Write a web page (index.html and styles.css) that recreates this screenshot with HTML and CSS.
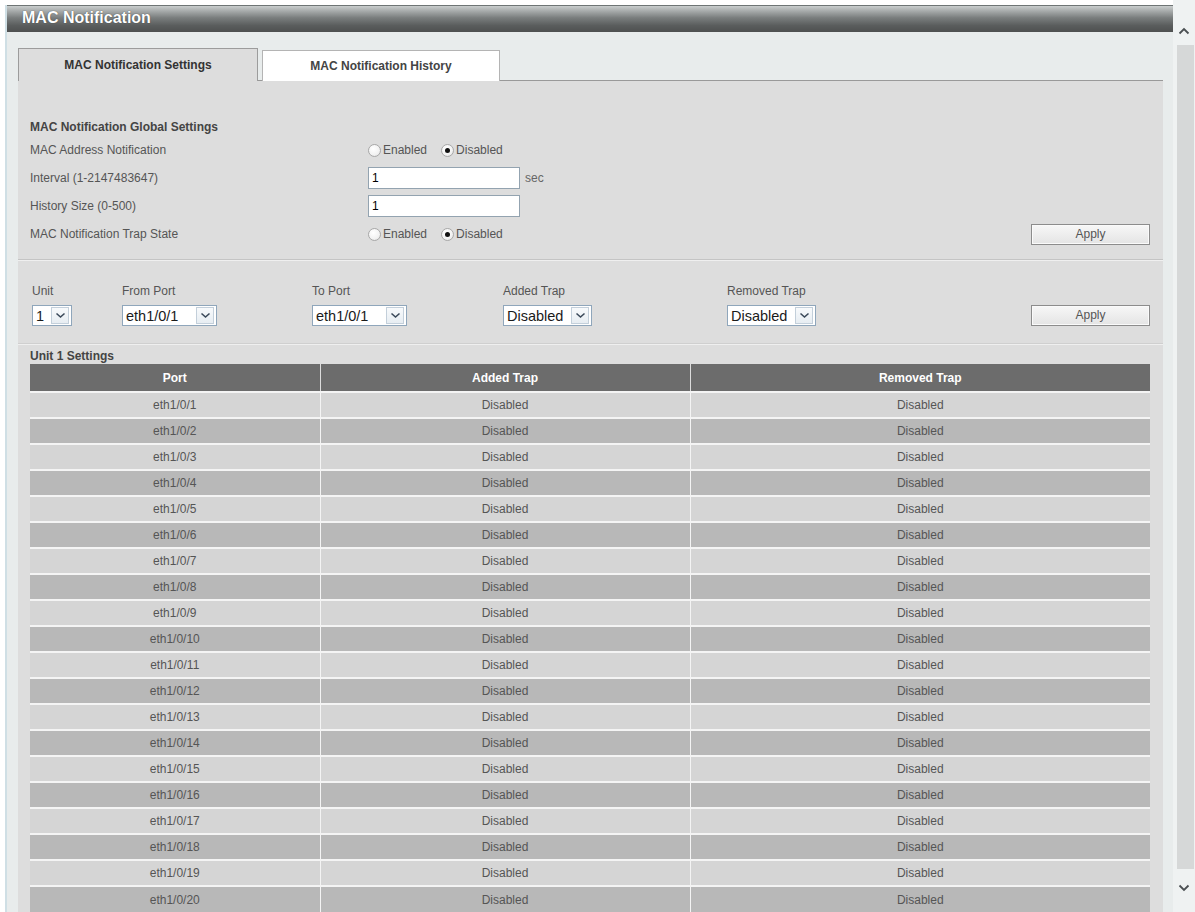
FILE: index.html
```html
<!DOCTYPE html>
<html>
<head>
<meta charset="utf-8">
<title>MAC Notification</title>
<link rel="stylesheet" href="styles.css">
</head>
<body>
<div class="screen">
  <div class="main">
    <div class="titlebar">MAC Notification</div>
    <div class="content">
      <div class="tabs">
        <div class="tab active">MAC Notification Settings</div>
        <div class="tab">MAC Notification History</div>
      </div>
      <div class="panel">
        <div class="section global">
          <div class="sec-title">MAC Notification Global Settings</div>
          <div class="grid">
            <div class="lbl">MAC Address Notification</div>
            <div class="ctl"><span class="radio"></span><span class="rtext">Enabled</span><span class="radio on"></span><span class="rtext">Disabled</span></div>
            <div></div>
            <div class="lbl">Interval (1-2147483647)</div>
            <div class="ctl"><span class="input">1</span><span class="unit">sec</span></div>
            <div></div>
            <div class="lbl">History Size (0-500)</div>
            <div class="ctl"><span class="input">1</span></div>
            <div></div>
            <div class="lbl">MAC Notification Trap State</div>
            <div class="ctl"><span class="radio"></span><span class="rtext">Enabled</span><span class="radio on"></span><span class="rtext">Disabled</span></div>
            <div class="btn-cell"><span class="btn">Apply</span></div>
          </div>
        </div>
        <div class="section ports">
          <div class="pgrid">
            <div class="field"><div class="flabel">Unit</div><div class="sel w-unit"><span>1</span><span class="arrow"><svg width="11" height="7" viewBox="0 0 11 7"><path d="M1.5 1.5 L5.5 5 L9.5 1.5" fill="none" stroke="#3c4a5a" stroke-width="1.6"/></svg></span></div></div>
            <div class="field"><div class="flabel">From Port</div><div class="sel w-port"><span>eth1/0/1</span><span class="arrow"><svg width="11" height="7" viewBox="0 0 11 7"><path d="M1.5 1.5 L5.5 5 L9.5 1.5" fill="none" stroke="#3c4a5a" stroke-width="1.6"/></svg></span></div></div>
            <div class="field"><div class="flabel">To Port</div><div class="sel w-port"><span>eth1/0/1</span><span class="arrow"><svg width="11" height="7" viewBox="0 0 11 7"><path d="M1.5 1.5 L5.5 5 L9.5 1.5" fill="none" stroke="#3c4a5a" stroke-width="1.6"/></svg></span></div></div>
            <div class="field"><div class="flabel">Added Trap</div><div class="sel w-trap"><span>Disabled</span><span class="arrow"><svg width="11" height="7" viewBox="0 0 11 7"><path d="M1.5 1.5 L5.5 5 L9.5 1.5" fill="none" stroke="#3c4a5a" stroke-width="1.6"/></svg></span></div></div>
            <div class="field"><div class="flabel">Removed Trap</div><div class="sel w-trap"><span>Disabled</span><span class="arrow"><svg width="11" height="7" viewBox="0 0 11 7"><path d="M1.5 1.5 L5.5 5 L9.5 1.5" fill="none" stroke="#3c4a5a" stroke-width="1.6"/></svg></span></div></div>
            <div class="field end"><span class="btn">Apply</span></div>
          </div>
        </div>
        <div class="unit-title">Unit 1 Settings</div>
        <table class="tbl">
          <thead><tr><th class="c1">Port</th><th class="c2">Added Trap</th><th class="c3">Removed Trap</th></tr></thead>
          <tbody>
            <tr><td>eth1/0/1</td><td>Disabled</td><td>Disabled</td></tr>
            <tr><td>eth1/0/2</td><td>Disabled</td><td>Disabled</td></tr>
            <tr><td>eth1/0/3</td><td>Disabled</td><td>Disabled</td></tr>
            <tr><td>eth1/0/4</td><td>Disabled</td><td>Disabled</td></tr>
            <tr><td>eth1/0/5</td><td>Disabled</td><td>Disabled</td></tr>
            <tr><td>eth1/0/6</td><td>Disabled</td><td>Disabled</td></tr>
            <tr><td>eth1/0/7</td><td>Disabled</td><td>Disabled</td></tr>
            <tr><td>eth1/0/8</td><td>Disabled</td><td>Disabled</td></tr>
            <tr><td>eth1/0/9</td><td>Disabled</td><td>Disabled</td></tr>
            <tr><td>eth1/0/10</td><td>Disabled</td><td>Disabled</td></tr>
            <tr><td>eth1/0/11</td><td>Disabled</td><td>Disabled</td></tr>
            <tr><td>eth1/0/12</td><td>Disabled</td><td>Disabled</td></tr>
            <tr><td>eth1/0/13</td><td>Disabled</td><td>Disabled</td></tr>
            <tr><td>eth1/0/14</td><td>Disabled</td><td>Disabled</td></tr>
            <tr><td>eth1/0/15</td><td>Disabled</td><td>Disabled</td></tr>
            <tr><td>eth1/0/16</td><td>Disabled</td><td>Disabled</td></tr>
            <tr><td>eth1/0/17</td><td>Disabled</td><td>Disabled</td></tr>
            <tr><td>eth1/0/18</td><td>Disabled</td><td>Disabled</td></tr>
            <tr><td>eth1/0/19</td><td>Disabled</td><td>Disabled</td></tr>
            <tr><td>eth1/0/20</td><td>Disabled</td><td>Disabled</td></tr>
          </tbody>
        </table>
      </div>
    </div>
  </div>
  <div class="scrollbar">
    <div class="sb-btn"><svg width="12" height="8" viewBox="0 0 12 8"><path d="M1.5 6.5 L6 2 L10.5 6.5" fill="none" stroke="#4a4f52" stroke-width="1.8"/></svg></div>
    <div class="sb-thumb"></div>
    <div class="sb-btn"><svg width="12" height="8" viewBox="0 0 12 8"><path d="M1.5 1.5 L6 6 L10.5 1.5" fill="none" stroke="#4a4f52" stroke-width="1.8"/></svg></div>
  </div>
</div>
</body>
</html>
```
FILE: styles.css
```css
* { box-sizing: border-box; }
html, body { margin: 0; padding: 0; }
body {
  background: #ffffff;
  font-family: "Liberation Sans", Arial, sans-serif;
  font-size: 12px;
  color: #555;
  overflow: hidden;
}
.screen {
  display: flex;
  width: 1195px;
  height: 912px;
  overflow: hidden;
}
.main {
  flex: 1;
  margin: 5px 0 0 5px;
  border-left: 2px solid #cfdfe5;
  display: flex;
  flex-direction: column;
  min-width: 0;
}
.titlebar {
  height: 27px;
  flex: none;
  border-top: 1px solid #6e7474;
  background: linear-gradient(#c9cdcd 0%, #a9adad 18%, #7a7e7e 45%, #5a5d5d 75%, #4e5050 100%);
  color: #fff;
  font-weight: bold;
  font-size: 16px;
  line-height: 24px;
  padding-left: 15px;
  text-shadow: 0 0 1px #333;
}
.content {
  flex: 1;
  background: #e8ecec;
  padding: 16px 10px 0 11px;
  display: flex;
  flex-direction: column;
  min-height: 0;
}
.tabs {
  display: flex;
  align-items: flex-end;
  gap: 4px;
  position: relative;
  z-index: 1;
  margin-bottom: -1px;
}
.tab {
  width: 238px;
  height: 31px;
  background: #fff;
  border: 1px solid #b4b4b4;
  border-bottom: none;
  font-weight: bold;
  color: #444;
  text-align: center;
  line-height: 30px;
}
.tab.active {
  width: 240px;
  height: 33px;
  background: #dddddd;
  border-color: #9c9c9c;
  color: #333;
  line-height: 32px;
}
.panel {
  flex: 1;
  background: #dddddd;
  border-top: 1px solid #999;
  min-height: 0;
  overflow: hidden;
}
.section {
  padding: 0 12px;
  border-bottom: 1px solid #c4c4c4;
  box-shadow: 0 1px 0 #efefef;
}
.global {
  padding-top: 38px;
  padding-bottom: 14px;
}
.sec-title {
  font-weight: bold;
  color: #444;
  line-height: 16px;
  margin-bottom: 4px;
}
.grid {
  display: grid;
  grid-template-columns: 338px 1fr auto;
  grid-auto-rows: 22px;
  row-gap: 6px;
  align-items: center;
}
.lbl { color: #555; }
.ctl {
  display: flex;
  align-items: center;
}
.radio {
  width: 13px;
  height: 13px;
  border-radius: 50%;
  border: 1px solid #a8a8a8;
  background: radial-gradient(circle at 40% 35%, #ffffff 0%, #f2f2f2 60%, #dcdcdc 100%);
  display: inline-flex;
  align-items: center;
  justify-content: center;
  flex: none;
}
.radio.on::after {
  content: "";
  width: 5px;
  height: 5px;
  border-radius: 50%;
  background: #111;
}
.rtext { margin: 0 14px 0 2px; color: #555; }
.input {
  width: 152px;
  height: 22px;
  background: #fff;
  border: 1px solid #93a3b0;
  color: #000;
  line-height: 20px;
  padding-left: 3px;
}
.unit { margin-left: 5px; color: #666; }
.btn-cell { display: flex; justify-content: flex-end; padding-right: 1px; }
.btn {
  display: inline-block;
  width: 119px;
  height: 21px;
  border: 1px solid #8c8c8c;
  background: linear-gradient(#f7f7f7, #e4e4e4);
  color: #555;
  text-align: center;
  line-height: 19px;
  box-shadow: inset 0 0 0 1px #fafafa;
}
.ports {
  padding-top: 23px;
  padding-bottom: 17px;
  border-bottom-color: #cfcfcf;
}
.pgrid {
  display: grid;
  grid-template-columns: 92px 190px 191px 224px 1fr auto;
  align-items: end;
  padding-right: 1px;
}
.field { display: flex; flex-direction: column; align-items: flex-start; }
.field:first-child { padding-left: 2px; }
.field.end { align-items: flex-end; }
.flabel { line-height: 16px; margin-bottom: 6px; color: #555; }
.sel {
  height: 21px;
  background: #fff;
  border: 1px solid #8fa6bb;
  display: flex;
  align-items: center;
  padding-left: 3px;
  font-size: 14.5px;
  color: #1a1a1a;
}
.sel .arrow {
  margin-left: auto;
  margin-right: 2px;
  width: 18px;
  height: 17px;
  border: 1px solid #c3cfda;
  background: linear-gradient(#f8fafc, #e7edf2);
  display: flex;
  align-items: center;
  justify-content: center;
}
.w-unit { width: 40px; }
.w-port { width: 95px; }
.w-trap { width: 89px; }
.unit-title {
  padding: 4px 12px 0;
  font-weight: bold;
  color: #444;
  line-height: 16px;
}
.tbl {
  margin: 0 12px;
  width: 1120px;
  border-collapse: collapse;
  table-layout: fixed;
}
.tbl th {
  height: 28px;
  background: #6c6c6c;
  color: #fff;
  font-weight: bold;
  text-align: center;
  padding: 0;
  border-left: 1px solid #dcdcdc;
}
.tbl th:first-child, .tbl td:first-child { border-left: none; }
.c1 { width: 290px; }
.c2 { width: 370px; }
.tbl td {
  height: 26px;
  border-top: 2px solid #f4f4f4;
  border-left: 1px solid #f4f4f4;
  text-align: center;
  color: #555;
  padding: 0;
}
.tbl tbody tr:nth-child(odd) td { background: #d5d5d5; }
.tbl tbody tr:nth-child(even) td { background: #b8b8b8; }
.scrollbar {
  width: 22px;
  flex: none;
  background: #eff2f2;
  display: flex;
  flex-direction: column;
  align-items: center;
  padding: 20px 0 13px;
}
.sb-btn {
  height: 22px;
  width: 22px;
  display: flex;
  align-items: center;
  justify-content: center;
  flex: none;
}
.sb-thumb {
  flex: 1;
  width: 17px;
  margin: 3px 0 8px 3px;
  background: #d6d8d8;
}
```
